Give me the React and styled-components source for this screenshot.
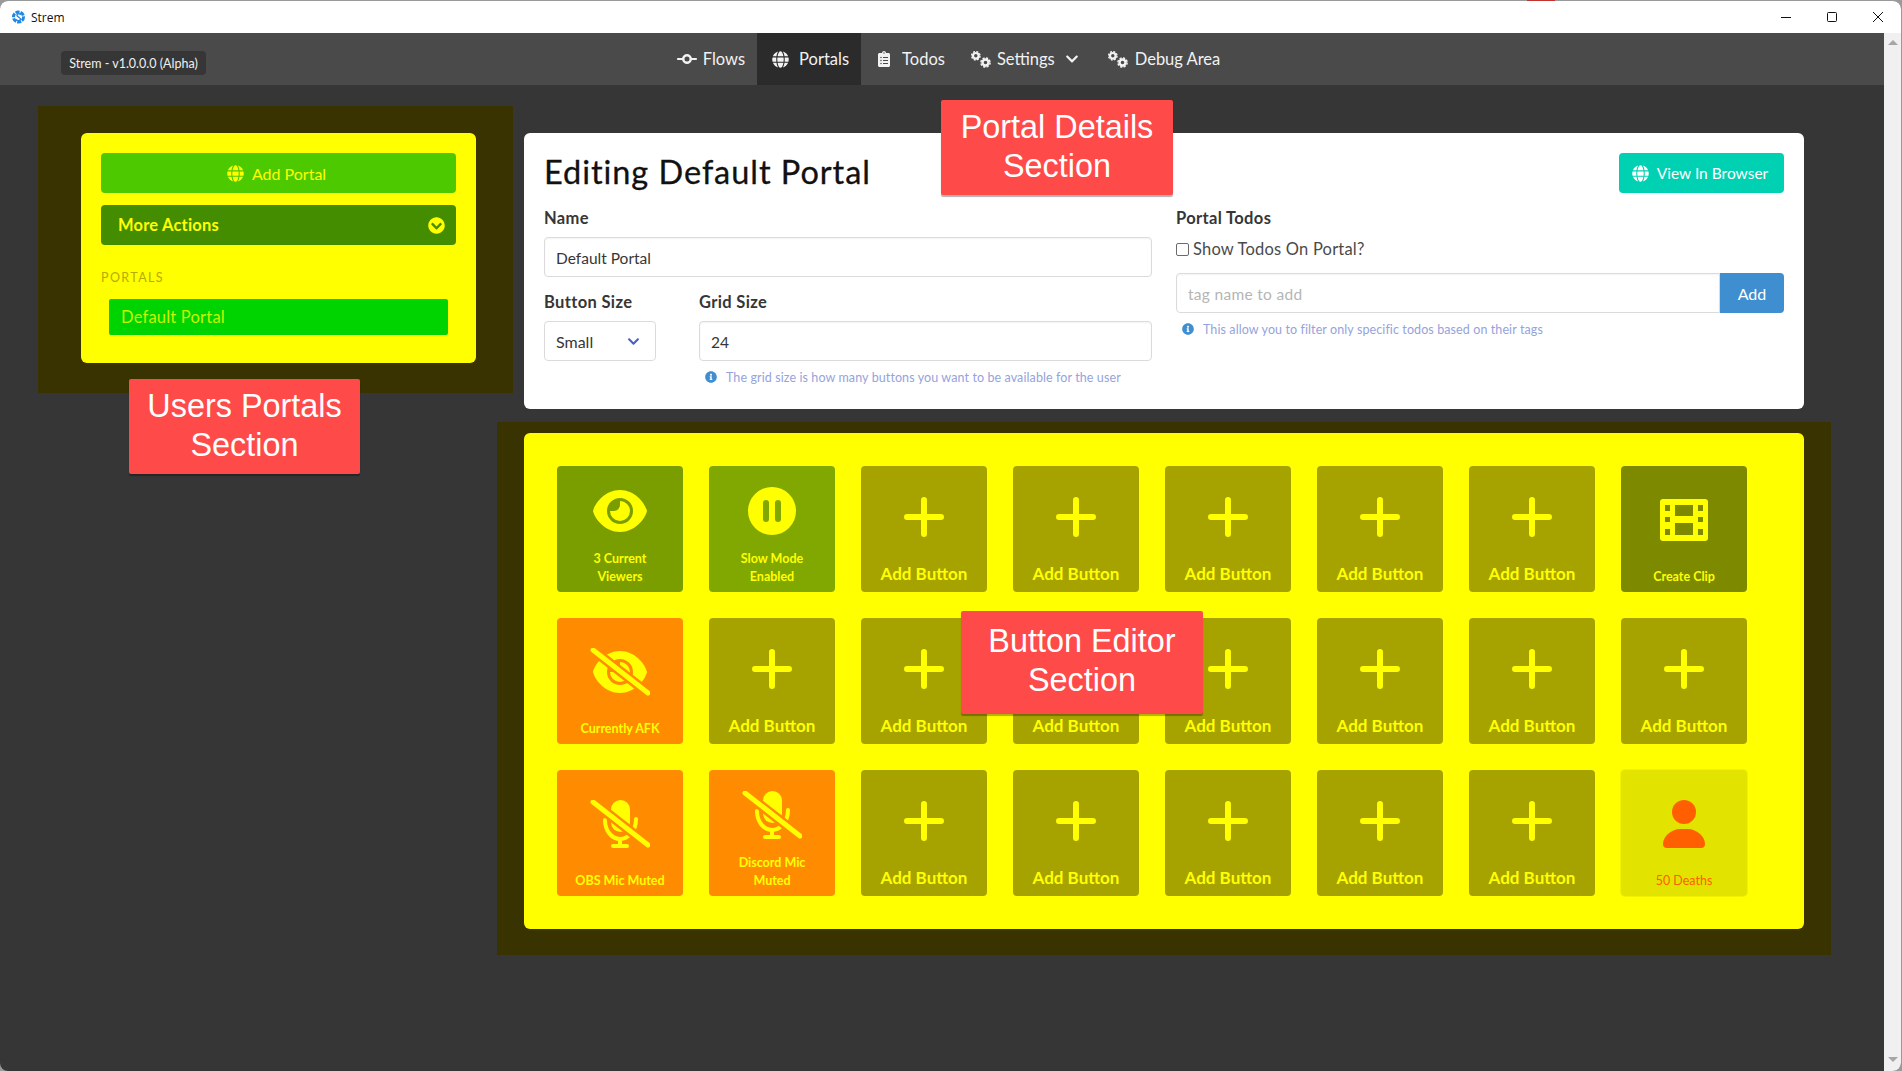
import React from 'react';
import styled, { createGlobalStyle } from 'styled-components';
import {
  FaGlobe,
  FaClipboardList,
  FaInfoCircle,
  FaChevronDown,
  FaChevronCircleDown,
} from 'react-icons/fa';
import { FaCodeCommit } from 'react-icons/fa6';

const GlobalStyle = createGlobalStyle`
  html, body {
    margin: 0;
    height: 1071px;
    overflow: hidden;
    background: #9a9a9a;
    font-family: 'Lato', 'Open Sans', sans-serif;
  }
  * { box-sizing: border-box; }
`;

const YELLOW = '#ffff00';

/* window chrome */
const BehindWindow = styled.div`
  position: fixed;
  left: 1527px;
  top: 0;
  width: 28px;
  height: 1px;
  background: #c0332f;
`;
const Win = styled.div`
  width: 1901px;
  height: 1070px;
  margin-top: 1px;
  border-radius: 8px;
  overflow: hidden;
  display: flex;
  flex-direction: column;
  background: #363636;
`;
const TitleBar = styled.div`
  height: 32px;
  flex: none;
  background: #fff;
  display: flex;
  align-items: center;
  padding-left: 12px;
  gap: 6px;
  font: 12px 'Open Sans', sans-serif;
  color: #111;
`;
const WinControls = styled.div`
  margin-left: auto;
  display: flex;
`;
const WinBtn = styled.div`
  width: 46px;
  height: 32px;
  display: flex;
  align-items: center;
  justify-content: center;
`;
const Body = styled.div`
  flex: 1;
  display: flex;
  min-height: 0;
`;
const Scrollbar = styled.div`
  width: 17px;
  flex: none;
  background: #f0f0f0;
  display: flex;
  flex-direction: column;
  justify-content: space-between;
  align-items: center;
  padding: 7px 0 9px;
`;
const Arrow = styled.div`
  width: 0;
  height: 0;
  border-left: 5px solid transparent;
  border-right: 5px solid transparent;
  ${(p) => (p.$up ? 'border-bottom: 5px solid #a6a6a6;' : 'border-top: 5px solid #a6a6a6;')}
`;
const Page = styled.div`
  flex: 1;
  display: flex;
  flex-direction: column;
  min-width: 0;
`;

/* top nav */
const Nav = styled.nav`
  position: relative;
  height: 52px;
  flex: none;
  background: #4a4a4a;
  display: flex;
  justify-content: center;
  padding-left: 10px;
`;
const VersionTip = styled.div`
  position: absolute;
  left: 61px;
  top: 18px;
  height: 24px;
  width: 145px;
  border-radius: 4px;
  background: #363636;
  color: #f0f0f0;
  font-size: 12.5px;
  display: flex;
  align-items: center;
  justify-content: center;
`;
const NavItem = styled.div`
  display: flex;
  align-items: center;
  gap: ${(p) => p.$gap || 10}px;
  padding: 0 ${(p) => p.$right || 12}px 0 ${(p) => p.$left || 15}px;
  color: #f2f2f2;
  font-size: 16.5px;
  background: ${(p) => (p.$active ? '#2b2b2b' : 'transparent')};
  svg { flex: none; }
`;

/* content */
const Main = styled.main`
  flex: 1;
  display: flex;
  gap: 48px;
  padding: 48px 0 0 81px;
  align-items: flex-start;
`;
const Card = styled.section`
  position: relative;
  border-radius: 6px;
  padding: 20px;
  background: ${(p) => (p.$yellow ? YELLOW : '#fff')};
`;
const Halo = styled.div`
  position: absolute;
  z-index: 0;
  background: #383300;
`;
const SideHalo = styled(Halo)`
  inset: -27px -37px -30px -43px;
`;
const GridHalo = styled(Halo)`
  inset: -11px -27px -26px -27px;
`;
const Sidebar = styled(Card)`
  width: 395px;
  display: flex;
  flex-direction: column;
  gap: 12px;
  padding-bottom: 28px;
`;
const SideBg = styled.div`
  position: absolute;
  inset: 0;
  border-radius: 6px;
  background: ${YELLOW};
`;
const ActionBtn = styled.div`
  position: relative;
  height: 40px;
  border-radius: 4px;
  display: flex;
  align-items: center;
  justify-content: ${(p) => (p.$split ? 'space-between' : 'center')};
  gap: 8px;
  padding: ${(p) => (p.$split ? '0 11px 0 17px' : '0 4px 0 0')};
  color: ${YELLOW};
  background: ${(p) => p.$bg};
  font-size: ${(p) => (p.$split ? 16.5 : 16)}px;
  font-weight: ${(p) => (p.$split ? 700 : 400)};
  letter-spacing: ${(p) => (p.$split ? 0.2 : 0)}px;
`;
const SectionLabel = styled.div`
  position: relative;
  margin-top: 11px;
  height: 20px;
  line-height: 20px;
  font-size: 12.5px;
  letter-spacing: 1.4px;
  color: #b5ac00;
`;
const PortalRow = styled.div`
  position: relative;
  height: 36px;
  margin: -1px 8px 0;
  padding-left: 12px;
  display: flex;
  align-items: center;
  border-radius: 2px;
  background: #00d400;
  color: #c8f400;
  font-size: 16.5px;
  letter-spacing: 0.2px;
`;

const RightCol = styled.div`
  width: 1280px;
  display: flex;
  flex-direction: column;
  gap: 24px;
`;
const DetailsCard = styled(Card)`
  height: 276px;
`;
const Header = styled.div`
  height: 40px;
  display: flex;
  align-items: center;
  justify-content: space-between;
  margin-bottom: 13px;
`;
const Title = styled.h1`
  margin: 0 0 4px;
  font-size: 32.5px;
  font-weight: 400;
  letter-spacing: 0.95px;
  color: #111;
  -webkit-text-stroke: 0.3px #111;
`;
const ViewBtn = styled.div`
  height: 40px;
  width: 165px;
  padding-right: 3px;
  border-radius: 4px;
  background: #00d1b2;
  color: #fff;
  display: flex;
  align-items: center;
  justify-content: center;
  gap: 8px;
  font-size: 15.5px;
`;
const Columns = styled.div`
  display: grid;
  grid-template-columns: 608px 608px;
  gap: 24px;
`;
const Stack = styled.div`
  display: flex;
  flex-direction: column;
`;
const FieldRow = styled.div`
  display: flex;
  gap: 43px;
  margin-top: 13px;
`;
const Label = styled.label`
  display: block;
  height: 24px;
  line-height: 24px;
  margin-bottom: 7px;
  font-size: 16.5px;
  font-weight: 700;
  letter-spacing: 0.35px;
  color: #363636;
`;
const Input = styled.div`
  height: 40px;
  flex: ${(p) => (p.$grow ? 1 : 'none')};
  border: 1px solid #dbdbdb;
  border-radius: ${(p) => (p.$joined ? '4px 0 0 4px' : '4px')};
  padding: 1px 11px 0;
  display: flex;
  align-items: center;
  font-size: 15.5px;
  letter-spacing: ${(p) => (p.$placeholder ? 0.3 : 0)}px;
  color: ${(p) => (p.$placeholder ? '#b5b5b5' : '#363636')};
  box-shadow: inset 0 1px 2px rgba(10, 10, 10, 0.05);
`;
const SelectBox = styled(Input)`
  width: 112px;
  justify-content: space-between;
  padding: 0 15px 0 11px;
  font-size: 16px;
  box-shadow: none;
`;
const GridField = styled.div`
  flex: 1;
`;
const Help = styled.div`
  height: 18px;
  margin-top: 7px;
  padding-left: ${(p) => p.$left || 0}px;
  display: flex;
  align-items: center;
  gap: 9px;
  font-size: 12.5px;
  letter-spacing: 0.1px;
  color: #95a3dc;
  svg { color: #3e8ed0; flex: none; }
`;
const CheckRow = styled.div`
  height: 24px;
  margin-bottom: 12px;
  display: flex;
  align-items: center;
  gap: 4px;
  font-size: 16.5px;
  letter-spacing: 0.2px;
  color: #4a4a4a;
`;
const Check = styled.span`
  width: 13px;
  height: 13px;
  border: 1px solid #6b6b6b;
  border-radius: 2px;
  background: #fff;
`;
const AddonRow = styled.div`
  display: flex;
`;
const AddBtn = styled.div`
  width: 64px;
  height: 40px;
  border-radius: 0 4px 4px 0;
  background: #3e8ed0;
  color: #fff;
  font-size: 16px;
  display: flex;
  align-items: center;
  justify-content: center;
`;

/* button grid */
const GridCard = styled(Card)`
  height: 496px;
  padding: 33px;
`;
const TileGrid = styled.div`
  position: relative;
  display: grid;
  grid-template-columns: repeat(8, 126px);
  grid-auto-rows: 126px;
  gap: 26px;
`;
const GridBg = styled.div`
  position: absolute;
  inset: 0;
  border-radius: 6px;
  background: ${YELLOW};
`;
const Tile = styled.div`
  border-radius: 4px;
  background: ${(p) => p.$bg};
  color: ${(p) => p.$fg || YELLOW};
  box-shadow: 0 0 0 ${(p) => (p.$ring ? 1 : 0)}px rgba(0, 0, 0, 0.05);
  padding: 6px 6px 6px;
  display: flex;
  flex-direction: column;
  align-items: center;
  text-align: center;
`;
const TileIcon = styled.div`
  flex: 1;
  display: flex;
  align-items: center;
  justify-content: center;
`;
const TileLabel = styled.div`
  font-size: ${(p) => (p.$big ? 17 : 12.5)}px;
  line-height: ${(p) => (p.$big ? 24 : 18)}px;
  font-weight: ${(p) => (p.$light ? 400 : 700)};
`;

/* red annotation boxes */
const Callout = styled.div`
  position: absolute;
  z-index: 5;
  display: flex;
  align-items: center;
  justify-content: center;
  text-align: center;
  padding-bottom: ${(p) => p.$lift || 2}px;
  background: #ff4a4a;
  border-radius: 2px;
  box-shadow: 0 2px 1px rgba(0, 0, 0, 0.3);
  color: #fff;
  font: 32.4px/39px 'Liberation Sans', Arial, sans-serif;
`;
const UsersCallout = styled(Callout)`
  left: 48px;
  top: 246px;
  width: 231px;
  height: 95px;
`;
const DetailsCallout = styled(Callout)`
  left: 417px;
  top: -33px;
  width: 232px;
  height: 95px;
`;
const EditorCallout = styled(Callout)`
  left: 404px;
  top: 145px;
  width: 242px;
  height: 103px;
`;

const EYE = 'M27 0C42 0 52 13 54 21C52 29 42 42 27 42C12 42 2 29 0 21C2 13 12 0 27 0Z';
const EYE_HOLE = 'M27 8a13 13 0 1 0 0 26a13 13 0 1 0 0-26Z';
const PUPIL = 'M27 11a10 10 0 1 1-10 10h4a6 6 0 0 0 6-6Z';

const EyeIcon = () => (
  <svg width="54" height="42" viewBox="0 0 54 42" fill="currentColor">
    <path fillRule="evenodd" d={EYE + EYE_HOLE} />
    <path d={PUPIL} />
  </svg>
);

const PauseIcon = () => (
  <svg width="48" height="48" viewBox="0 0 48 48" fill="currentColor">
    <path
      fillRule="evenodd"
      d="M24 0a24 24 0 1 0 0 48a24 24 0 1 0 0-48Z
         M15 16a3 3 0 0 1 6 0v16a3 3 0 0 1-6 0Z
         M27 16a3 3 0 0 1 6 0v16a3 3 0 0 1-6 0Z"
    />
  </svg>
);

const PlusIcon = () => (
  <svg width="40" height="40" viewBox="0 0 40 40" stroke="currentColor" strokeWidth="6" strokeLinecap="round">
    <path d="M20 3v34M3 20h34" />
  </svg>
);

const FilmIcon = () => (
  <svg width="48" height="42" viewBox="0 0 48 42" fill="currentColor">
    <path
      fillRule="evenodd"
      d="M3 0H45a3 3 0 0 1 3 3V39a3 3 0 0 1-3 3H3a3 3 0 0 1-3-3V3a3 3 0 0 1 3-3Z
         M5 6v6h5V6Z M5 18v5h5V18Z M5 30v6h5V30Z
         M38 6v6h5V6Z M38 18v5h5V18Z M38 30v6h5V30Z
         M15 6v11h18V6Z M15 24v12h18V24Z"
    />
  </svg>
);

const Slash = ({ gap }) => (
  <>
    <path d="M3 2L58 45" stroke={gap} strokeWidth="10" />
    <path d="M3 2L58 45" stroke="currentColor" strokeWidth="5" strokeLinecap="round" />
  </>
);

const EyeSlashIcon = ({ gap }) => (
  <svg width="60" height="48" viewBox="0 0 60 48" fill="currentColor">
    <g transform="translate(3 3)">
      <path fillRule="evenodd" d={EYE + EYE_HOLE} />
      <path d={PUPIL} />
    </g>
    <Slash gap={gap} />
  </svg>
);

const MicSlashIcon = ({ gap }) => (
  <svg width="60" height="48" viewBox="0 0 60 48" fill="currentColor">
    <rect x="21" y="0" width="19" height="32" rx="9.5" />
    <path d="M15 20c0 11 7 19 15 19s16-8 16-20" fill="none" stroke="currentColor" strokeWidth="4" strokeLinecap="round" />
    <path d="M30 38v7" stroke="currentColor" strokeWidth="4" />
    <rect x="21" y="44" width="18" height="4" rx="2" />
    <Slash gap={gap} />
  </svg>
);

const UserIcon = () => (
  <svg width="42" height="48" viewBox="0 0 42 48" fill="currentColor">
    <circle cx="21" cy="12" r="12" />
    <path d="M4 48H38a4 4 0 0 0 4-4C42 36 33 29 25 29H17C9 29 0 36 0 44a4 4 0 0 0 4 4Z" />
  </svg>
);

// two small gears, top left and bottom right
const CogsIcon = () => (
  <svg width="20" height="17" viewBox="0 0 20 17" fill="none" stroke="#f2f2f2">
    <circle cx="4.8" cy="4.8" r="2.8" strokeWidth="2.2" />
    <circle cx="4.8" cy="4.8" r="4.2" strokeWidth="1.4" strokeDasharray="2 1.3" />
    <circle cx="14.5" cy="11.5" r="3" strokeWidth="2.4" />
    <circle cx="14.5" cy="11.5" r="4.6" strokeWidth="1.5" strokeDasharray="2.2 1.4" />
  </svg>
);

const AppLogo = () => (
  <svg width="13" height="14" viewBox="0 0 13 14">
    <circle cx="6.5" cy="7" r="5" fill="none" stroke="#1e88e5" strokeWidth="3" strokeDasharray="4 1" />
    <path d="M9 4.5C7 3 4.5 4 5 5.5S9 8 8.5 9.5S5.5 11 4 9.5" fill="none" stroke="#1e88e5" strokeWidth="1.3" />
  </svg>
);

const OLIVE = '#a6a300';
const ORANGE = '#ff8c00';

const addTile = { add: true };
const rows = [
  { bg: '#7a9e00', icon: <EyeIcon />, lines: ['3 Current', 'Viewers'] },
  { bg: '#80a800', icon: <PauseIcon />, lines: ['Slow Mode', 'Enabled'] },
  addTile, addTile, addTile, addTile, addTile,
  { bg: '#7d8a00', icon: <FilmIcon />, lines: ['Create Clip'] },
  { bg: ORANGE, icon: <EyeSlashIcon gap={ORANGE} />, lines: ['Currently AFK'] },
  addTile, addTile, addTile, addTile, addTile, addTile, addTile,
  { bg: ORANGE, icon: <MicSlashIcon gap={ORANGE} />, lines: ['OBS Mic Muted'] },
  { bg: ORANGE, icon: <MicSlashIcon gap={ORANGE} />, lines: ['Discord Mic', 'Muted'] },
  addTile, addTile, addTile, addTile, addTile,
  { bg: '#e3e300', fg: '#ff5f00', ring: true, light: true, icon: <UserIcon />, lines: ['50 Deaths'] },
];

export default function App() {
  return (
    <>
      <GlobalStyle />
      <BehindWindow />
      <Win>
        <TitleBar>
          <AppLogo />
          <span>Strem</span>
          <WinControls>
            <WinBtn>
              <svg width="10" height="10" viewBox="0 0 10 10" stroke="#111"><path d="M0 5.5h10" /></svg>
            </WinBtn>
            <WinBtn>
              <svg width="10" height="10" viewBox="0 0 10 10" fill="none" stroke="#111"><rect x=".5" y=".5" width="9" height="9" rx="1" /></svg>
            </WinBtn>
            <WinBtn>
              <svg width="10" height="10" viewBox="0 0 10 10" stroke="#111"><path d="M0 0l10 10M10 0L0 10" /></svg>
            </WinBtn>
          </WinControls>
        </TitleBar>
        <Body>
          <Page>
            <Nav>
              <VersionTip>Strem - v1.0.0.0 (Alpha)</VersionTip>
              <NavItem $gap={6}><FaCodeCommit size={20} />Flows</NavItem>
              <NavItem $active><FaGlobe size={17} />Portals</NavItem>
              <NavItem $left={15} $right={25}><FaClipboardList size={16} />Todos</NavItem>
              <NavItem $left={1} $right={28} $gap={6}>
                <CogsIcon />Settings<FaChevronDown size={14} style={{ marginLeft: 4 }} />
              </NavItem>
              <NavItem $left={1} $gap={7}><CogsIcon />Debug Area</NavItem>
            </Nav>
            <Main>
              <Sidebar $yellow>
                <SideHalo />
                <SideBg />
                <ActionBtn $bg="#4dc900"><FaGlobe size={17} />Add Portal</ActionBtn>
                <ActionBtn $bg="#448c00" $split>More Actions<FaChevronCircleDown size={17} /></ActionBtn>
                <SectionLabel>PORTALS</SectionLabel>
                <PortalRow>Default Portal</PortalRow>
                <UsersCallout>Users Portals<br />Section</UsersCallout>
              </Sidebar>
              <RightCol>
                <DetailsCard>
                  <DetailsCallout $lift={1}>Portal Details<br />Section</DetailsCallout>
                  <Header>
                    <Title>Editing Default Portal</Title>
                    <ViewBtn><FaGlobe size={17} />View In Browser</ViewBtn>
                  </Header>
                  <Columns>
                    <Stack>
                      <Label>Name</Label>
                      <Input>Default Portal</Input>
                      <FieldRow>
                        <div>
                          <Label>Button Size</Label>
                          <SelectBox>Small<FaChevronDown size={13} color="#485fc7" /></SelectBox>
                        </div>
                        <GridField>
                          <Label>Grid Size</Label>
                          <Input>24</Input>
                          <Help $left={6}>
                            <FaInfoCircle size={12} />
                            The grid size is how many buttons you want to be available for the user
                          </Help>
                        </GridField>
                      </FieldRow>
                    </Stack>
                    <Stack>
                      <Label>Portal Todos</Label>
                      <CheckRow><Check />Show Todos On Portal?</CheckRow>
                      <AddonRow>
                        <Input $grow $joined $placeholder>tag name to add</Input>
                        <AddBtn>Add</AddBtn>
                      </AddonRow>
                      <Help $left={6}>
                        <FaInfoCircle size={12} />
                        This allow you to filter only specific todos based on their tags
                      </Help>
                    </Stack>
                  </Columns>
                </DetailsCard>
                <GridCard $yellow>
                  <GridHalo />
                  <GridBg />
                  <TileGrid>
                    {rows.map((t, i) =>
                      t.add ? (
                        <Tile key={i} $bg={OLIVE}>
                          <TileIcon><PlusIcon /></TileIcon>
                          <TileLabel $big>Add Button</TileLabel>
                        </Tile>
                      ) : (
                        <Tile key={i} $bg={t.bg} $fg={t.fg} $ring={t.ring}>
                          <TileIcon>{t.icon}</TileIcon>
                          <TileLabel $light={t.light}>
                            {t.lines.map((l) => <div key={l}>{l}</div>)}
                          </TileLabel>
                        </Tile>
                      )
                    )}
                    <EditorCallout $lift={3}>Button Editor<br />Section</EditorCallout>
                  </TileGrid>
                </GridCard>
              </RightCol>
            </Main>
          </Page>
          <Scrollbar>
            <Arrow $up />
            <Arrow />
          </Scrollbar>
        </Body>
      </Win>
    </>
  );
}
